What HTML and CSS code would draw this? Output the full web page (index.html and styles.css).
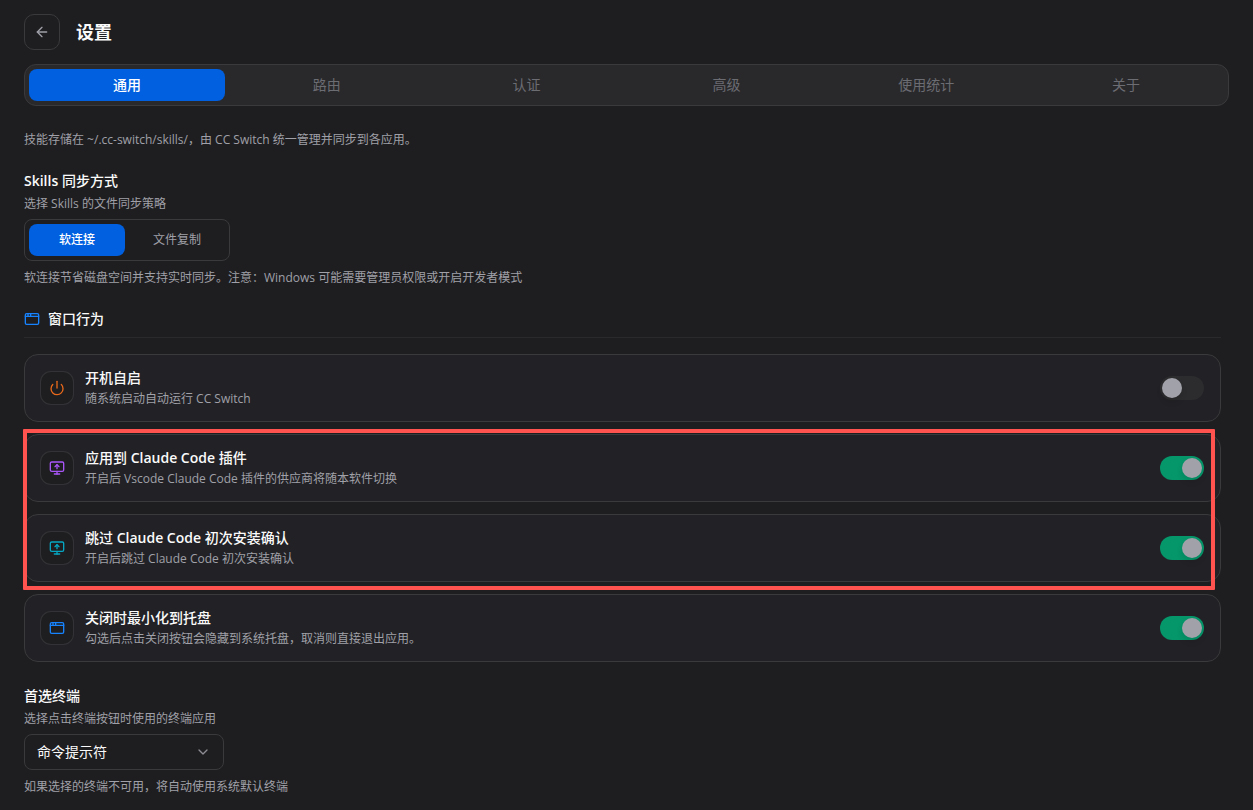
FILE: index.html
```html
<!DOCTYPE html>
<html lang="zh-CN">
<head>
<meta charset="utf-8">
<meta name="viewport" content="width=device-width, initial-scale=1">
<title>设置</title>
<link rel="stylesheet" href="styles.css">
</head>
<body>
<svg class="sprite" aria-hidden="true">
  <symbol id="arrow-left" viewBox="0 0 24 24"><path d="m12 19-7-7 7-7"/><path d="M19 12H5"/></symbol>
  <symbol id="window" viewBox="0 0 24 24"><rect x="2" y="4" width="20" height="16" rx="2"/><path d="M10 4v4"/><path d="M2 8h20"/><path d="M6 4v4"/></symbol>
  <symbol id="power" viewBox="0 0 24 24"><path d="M12 2v10"/><path d="M18.4 6.6a9 9 0 1 1-12.77.04"/></symbol>
  <symbol id="monitor-up" viewBox="0 0 24 24"><path d="m9 10 3-3 3 3"/><path d="M12 13V7"/><rect x="2" y="3" width="20" height="14" rx="2"/><path d="M12 17v4"/><path d="M8 21h8"/></symbol>
  <symbol id="chevron" viewBox="0 0 24 24"><path d="m6 9 6 6 6-6"/></symbol>
</svg>
<div class="app">
  <header class="header">
    <button class="back" type="button" aria-label="返回"><svg class="icon"><use href="#arrow-left"/></svg></button>
    <h1 class="title">设置</h1>
  </header>

  <nav class="tabs" role="tablist">
    <button class="tab active" type="button" role="tab" aria-selected="true">通用</button>
    <button class="tab" type="button" role="tab">路由</button>
    <button class="tab" type="button" role="tab">认证</button>
    <button class="tab" type="button" role="tab">高级</button>
    <button class="tab" type="button" role="tab">使用统计</button>
    <button class="tab" type="button" role="tab">关于</button>
  </nav>

  <main class="content">
    <p class="hint">技能存储在 ~/.cc-switch/skills/，由 CC Switch 统一管理并同步到各应用。</p>

    <section class="section">
      <h2 class="heading"><span class="latin">Skills</span> 同步方式</h2>
      <p class="hint">选择 Skills 的文件同步策略</p>
      <div class="segmented">
        <button class="segment active" type="button">软连接</button>
        <button class="segment" type="button">文件复制</button>
      </div>
      <p class="hint">软连接节省磁盘空间并支持实时同步。注意：Windows 可能需要管理员权限或开启开发者模式</p>
    </section>

    <section class="section">
      <div class="group-head">
        <svg class="icon blue"><use href="#window"/></svg>
        <h2 class="heading">窗口行为</h2>
      </div>
      <div class="cards">
        <div class="card">
          <span class="badge"><svg class="icon orange"><use href="#power"/></svg></span>
          <label class="card-text" for="launch"><span class="card-title">开机自启</span><span class="hint">随系统启动自动运行 CC Switch</span></label>
          <input class="switch" id="launch" type="checkbox" role="switch">
        </div>
        <div class="cards marked">
          <div class="card">
            <span class="badge"><svg class="icon purple"><use href="#monitor-up"/></svg></span>
            <label class="card-text" for="plugin"><span class="card-title">应用到 <span class="latin">Claude Code</span> 插件</span><span class="hint">开启后 Vscode Claude Code 插件的供应商将随本软件切换</span></label>
            <input class="switch" id="plugin" type="checkbox" role="switch" checked>
          </div>
          <div class="card">
            <span class="badge"><svg class="icon cyan"><use href="#monitor-up"/></svg></span>
            <label class="card-text" for="skip"><span class="card-title">跳过 <span class="latin">Claude Code</span> 初次安装确认</span><span class="hint">开启后跳过 Claude Code 初次安装确认</span></label>
            <input class="switch" id="skip" type="checkbox" role="switch" checked>
          </div>
        </div>
        <div class="card">
          <span class="badge"><svg class="icon blue"><use href="#window"/></svg></span>
          <label class="card-text" for="tray"><span class="card-title">关闭时最小化到托盘</span><span class="hint">勾选后点击关闭按钮会隐藏到系统托盘，取消则直接退出应用。</span></label>
          <input class="switch" id="tray" type="checkbox" role="switch" checked>
        </div>
      </div>
    </section>

    <section class="section last">
      <h2 class="heading"><label for="terminal">首选终端</label></h2>
      <p class="hint">选择点击终端按钮时使用的终端应用</p>
      <div class="select-wrap">
        <select class="select" id="terminal"><option>命令提示符</option></select>
        <svg class="icon chevron"><use href="#chevron"/></svg>
      </div>
      <p class="hint">如果选择的终端不可用，将自动使用系统默认终端</p>
    </section>
  </main>
</div>
</body>
</html>
```

FILE: styles.css
```css
:root {
  --bg: #1e1e20;
  --panel: #222226;
  --border: #3a3a3d;
  --muted: #a0a0a8;
  --accent: #0060df;
}

* {
  box-sizing: border-box;
}

body {
  margin: 0;
  background: var(--bg);
  color: #fafafa;
  font-family: "Open Sans", "Noto Sans CJK SC", sans-serif;
  font-size: 14px;
  line-height: 20px;
}

button,
select {
  font: inherit;
  color: inherit;
}

h1,
h2,
p {
  margin: 0;
}

.sprite {
  display: none;
}

.icon {
  width: 16px;
  height: 16px;
  flex: none;
  fill: none;
  stroke: currentColor;
  stroke-width: 2;
  stroke-linecap: round;
  stroke-linejoin: round;
}

.blue { color: #1783ff; }
.orange { color: #e8691b; }
.purple { color: #a855f7; }
.cyan { color: #06a6c2; }

.app {
  min-height: 100vh;
  padding: 14px 24px 12px;
}

.header {
  display: flex;
  align-items: center;
  gap: 16px;
}

.back {
  display: flex;
  align-items: center;
  justify-content: center;
  width: 36px;
  height: 36px;
  padding: 0;
  border: 1px solid var(--border);
  border-radius: 10px;
  background: none;
  color: var(--muted);
}

.title {
  font-size: 18px;
  line-height: 28px;
  font-weight: 700;
}

.tabs {
  display: grid;
  grid-template-columns: repeat(6, 1fr);
  gap: 4px;
  margin-top: 14px;
  padding: 4px;
  border: 1px solid var(--border);
  border-radius: 12px;
  background: #29292b;
}

.tab,
.segment {
  height: 32px;
  padding: 0;
  border: 0;
  border-radius: 8px;
  background: none;
}

.tab {
  color: #6c6c73;
}

.tab.active,
.segment.active {
  background: var(--accent);
  color: #fff;
  font-weight: 500;
}

.content {
  display: flex;
  flex-direction: column;
  gap: 22px;
  padding: 25px 8px 0 0;
}

.section {
  display: flex;
  flex-direction: column;
  align-items: flex-start;
}

.section.last {
  margin-top: 2px;
}

.heading,
.card-title {
  font-size: 14px;
  line-height: 20px;
  font-weight: 500;
}

.latin {
  font-weight: 600;
}

.hint {
  font-size: 12px;
  line-height: 18px;
  color: var(--muted);
}

.heading + .hint {
  margin-top: 4px;
}

.segmented {
  display: flex;
  gap: 4px;
  margin: 6px 0 8px;
  padding: 4px;
  border: 1px solid var(--border);
  border-radius: 8px;
}

.segment {
  width: 96px;
  font-size: 12px;
  color: var(--muted);
}

.group-head {
  display: flex;
  align-items: center;
  gap: 8px;
  width: 100%;
  padding-bottom: 8px;
  border-bottom: 1px solid #2a2a2c;
}

.cards {
  display: flex;
  flex-direction: column;
  gap: 12px;
  width: 100%;
}

.group-head + .cards {
  margin-top: 16px;
}

.marked {
  position: relative;
}

.marked::after {
  content: "";
  position: absolute;
  inset: -5px 6px -8px -1px;
  border: 4px solid #ff5350;
  border-radius: 1px;
  pointer-events: none;
}

.card {
  display: flex;
  align-items: center;
  gap: 12px;
  min-height: 68px;
  padding: 12px 16px;
  border: 1px solid var(--border);
  border-radius: 14px;
  background: var(--panel);
}

.badge {
  display: flex;
  align-items: center;
  justify-content: center;
  width: 32px;
  height: 32px;
  border-radius: 10px;
  background: var(--bg);
  box-shadow: 0 0 0 1px #333337;
}

.card-text {
  display: flex;
  flex: 1;
  flex-direction: column;
  gap: 2px;
}

.switch {
  appearance: none;
  width: 44px;
  height: 24px;
  margin: 0;
  padding: 2px;
  border-radius: 12px;
  background: #2c2c2e;
}

.switch::before {
  content: "";
  display: block;
  width: 20px;
  height: 20px;
  border-radius: 50%;
  background: #a1a1aa;
  box-shadow: 0 4px 6px rgb(0 0 0 / 10%);
}

.switch:checked {
  background: #059669;
}

.switch:checked::before {
  margin-left: auto;
}

.select-wrap {
  position: relative;
  width: 200px;
  margin: 6px 0 8px;
}

.select {
  appearance: none;
  display: block;
  width: 100%;
  height: 36px;
  padding: 0 12px;
  border: 1px solid var(--border);
  border-radius: 8px;
  background: var(--bg);
}

.chevron {
  position: absolute;
  top: 10px;
  right: 13px;
  color: #8c8c92;
  pointer-events: none;
}
```
